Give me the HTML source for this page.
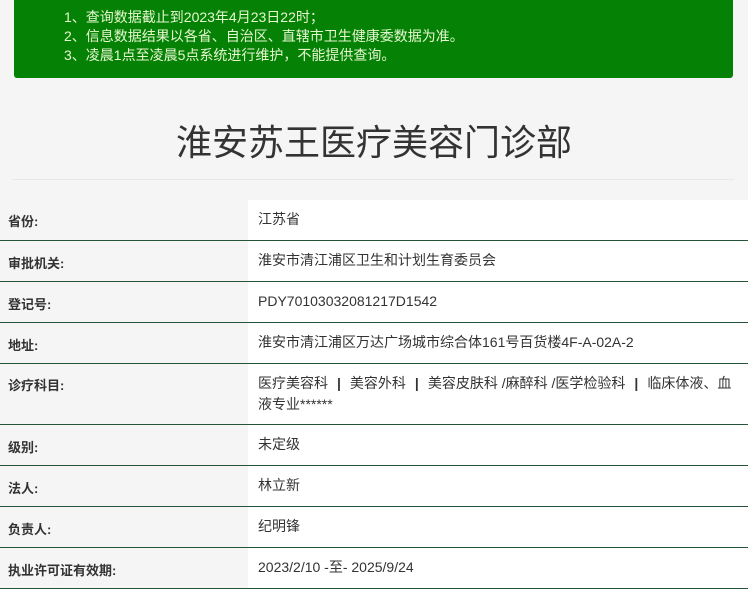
<!DOCTYPE html>
<html><head><meta charset="utf-8"><style>
*{margin:0;padding:0;box-sizing:border-box}
body{width:748px;height:589px;overflow:hidden;background:#f5f5f5;font-family:"Liberation Sans","Noto Sans CJK SC",sans-serif;position:relative}
.notice{position:absolute;left:14px;top:0;width:719px;height:78px;background:#058205;border-radius:0 0 3px 3px;color:#e6f7d0;font-size:14px;line-height:19px;padding:8px 0 0 50px}
.title{position:absolute;top:118px;left:0;width:748px;text-align:center;font-size:36px;color:#333;line-height:50px}
.hr{position:absolute;top:179px;left:12px;width:722px;height:1px;background:#e8e8e8}
.row{position:absolute;left:0;width:748px;border-bottom:1px solid #25543a;font-size:13px;color:#333}
.lab{position:absolute;left:8px;font-weight:bold}
.val{position:absolute;left:248px;right:0;top:0;bottom:0;background:#fff;padding-left:10px;line-height:21px;font-size:14px}
b{font-weight:bold;margin:0 9px}
</style></head><body>
<div class="notice">1、查询数据截止到2023年4月23日22时；<br>2、信息数据结果以各省、自治区、直辖市卫生健康委数据为准。<br>3、凌晨1点至凌晨5点系统进行维护，不能提供查询。</div>
<div class="title">淮安苏王医疗美容门诊部</div>
<div class="hr"></div>
<div class="row" style="top:200px;height:41px"><span class="lab" style="top:11px">省份:</span><div class="val" style="padding-top:9px">江苏省</div></div>
<div class="row" style="top:241px;height:41px"><span class="lab" style="top:12px">审批机关:</span><div class="val" style="padding-top:9px">淮安市清江浦区卫生和计划生育委员会</div></div>
<div class="row" style="top:282px;height:41px"><span class="lab" style="top:12px">登记号:</span><div class="val" style="padding-top:9px">PDY70103032081217D1542</div></div>
<div class="row" style="top:323px;height:41px"><span class="lab" style="top:12px">地址:</span><div class="val" style="padding-top:9px">淮安市清江浦区万达广场城市综合体161号百货楼4F-A-02A-2</div></div>
<div class="row" style="top:364px;height:61px"><span class="lab" style="top:11px">诊疗科目:</span><div class="val" style="padding-top:9px;padding-right:6px">医疗美容科<b>|</b>美容外科<b>|</b>美容皮肤科 /麻醉科 /医学检验科<b>|</b>临床体液、血液专业******</div></div>
<div class="row" style="top:425px;height:41px"><span class="lab" style="top:12px">级别:</span><div class="val" style="padding-top:9px">未定级</div></div>
<div class="row" style="top:466px;height:41px"><span class="lab" style="top:12px">法人:</span><div class="val" style="padding-top:9px">林立新</div></div>
<div class="row" style="top:507px;height:41px"><span class="lab" style="top:12px">负责人:</span><div class="val" style="padding-top:9px">纪明锋</div></div>
<div class="row" style="top:548px;height:41px"><span class="lab" style="top:12px">执业许可证有效期:</span><div class="val" style="padding-top:9px">2023/2/10 -至- 2025/9/24</div></div>
</body></html>
